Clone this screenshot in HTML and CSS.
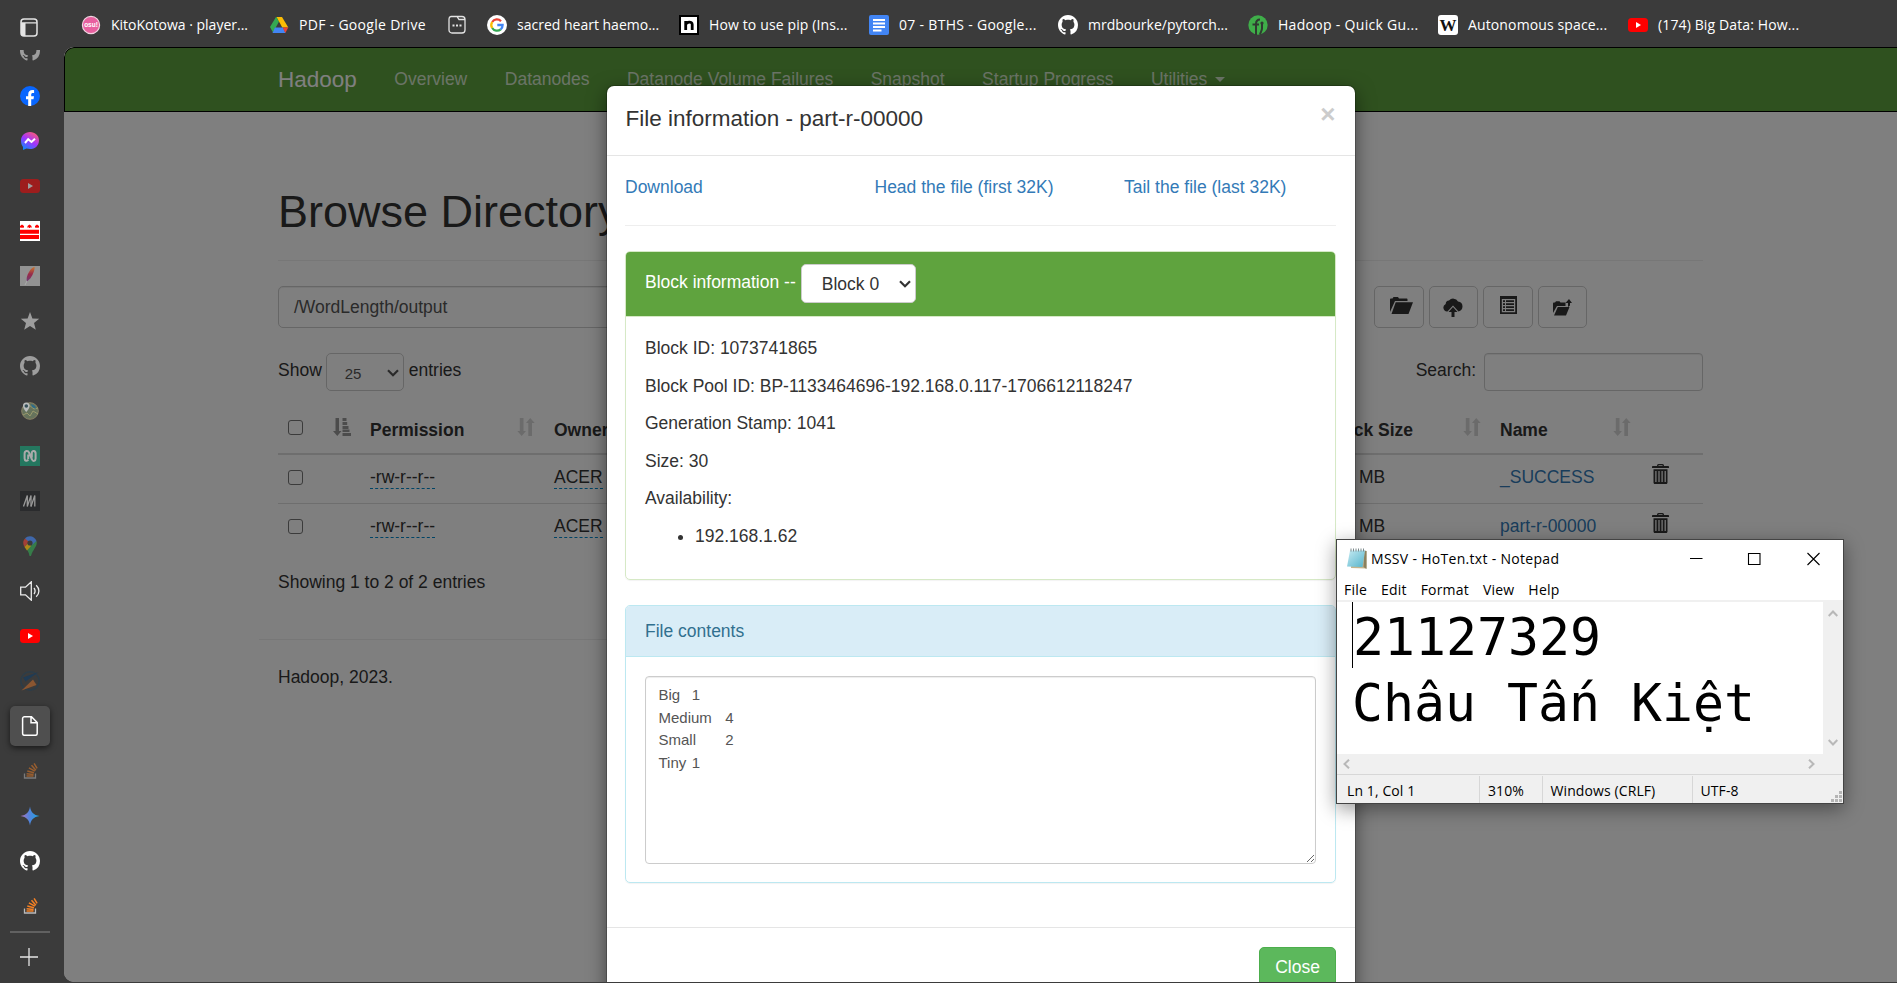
FILE: index.html
```html
<!DOCTYPE html>
<html lang="en">
<head>
<meta charset="utf-8">
<title>Browsing HDFS</title>
<link rel="stylesheet" href="styles.css">
</head>
<body>
<svg class="defs" width="0" height="0" aria-hidden="true">
  <defs>
    <linearGradient id="msg" x1="0.2" y1="1" x2="0.8" y2="0"><stop offset="0" stop-color="#0a8cff"/><stop offset=".5" stop-color="#a033ff"/><stop offset="1" stop-color="#ff5c72"/></linearGradient>
    <linearGradient id="gem" x1="0" y1="0" x2="1" y2="0"><stop offset="0" stop-color="#b573b8"/><stop offset=".45" stop-color="#5583dd"/><stop offset="1" stop-color="#18a5e0"/></linearGradient>
    <linearGradient id="quill" x1="0" y1="1" x2="0" y2="0"><stop offset="0" stop-color="#6b3b77"/><stop offset=".5" stop-color="#9a2b49"/><stop offset="1" stop-color="#c9782d"/></linearGradient>
    <linearGradient id="pad" x1="0" y1="0" x2="1" y2="1"><stop offset="0" stop-color="#c5eaf2"/><stop offset="1" stop-color="#55b4cb"/></linearGradient>
  </defs>
  <symbol id="github" viewBox="0 0 16 16"><path fill="currentColor" d="M8 0C3.58 0 0 3.58 0 8c0 3.54 2.29 6.53 5.47 7.59.4.07.55-.17.55-.38 0-.19-.01-.82-.01-1.49-2.01.37-2.53-.49-2.69-.94-.09-.23-.48-.94-.82-1.13-.28-.15-.68-.52-.01-.53.63-.01 1.08.58 1.23.82.72 1.21 1.87.87 2.33.66.07-.52.28-.87.51-1.07-1.78-.2-3.64-.89-3.64-3.95 0-.87.31-1.59.82-2.15-.08-.2-.36-1.02.08-2.12 0 0 .67-.21 2.2.82.64-.18 1.32-.27 2-.27s1.36.09 2 .27c1.53-1.04 2.2-.82 2.2-.82.44 1.1.16 1.92.08 2.12.51.56.82 1.27.82 2.15 0 3.07-1.87 3.75-3.65 3.95.29.25.54.73.54 1.48 0 1.07-.01 1.93-.01 2.2 0 .21.15.46.55.38A8.01 8.01 0 0 0 16 8c0-4.42-3.58-8-8-8z"/></symbol>
  <symbol id="youtube" viewBox="0 0 20 20"><rect y="3" width="20" height="14" rx="3.5" fill="red"/><path d="M8 7v6l5-3z" fill="#fff"/></symbol>
  <symbol id="stack" viewBox="0 0 20 20"><path d="M4.500 12.500V17h11v-4.500" fill="none" stroke="#bcbbbb" stroke-width="1.300"/><g stroke="#f48024" stroke-width="1.500"><path d="M6.500 15h7M6.600 12.700l7 .7M7.300 10l6.700 1.700M8.900 6.900l6 3.300M11.500 4.300l4.400 5M14.100 2.300l3 5"/></g></symbol>
  <symbol id="sort" viewBox="0 0 18 18"><path fill="currentColor" d="M2.800 0h3.700v13H9l-4.300 5L.3 13h2.500zM11.300 18H15V5h2.700L13.200 0 9 5h2.300z"/></symbol>
  <symbol id="trash" viewBox="0 0 17 20"><path fill="currentColor" fill-rule="evenodd" d="M5 2c0-1.300.5-2 1.500-2h4c1 0 1.500.7 1.500 2h4c.6 0 1 .4 1 1v1H0V3c0-.6.400-1 1-1zm1.300 0h4.400c0-.5-.2-.8-.6-.8H6.900c-.4 0-.6.300-.6.800zM1.500 5.300h14V18.500c0 .9-.5 1.500-1.300 1.500H2.800c-.8 0-1.300-.6-1.300-1.500zM3.300 7v11h1.200V7zm3.100 0v11h1.200V7zm3.100 0v11h1.200V7zm3.100 0v11h1.200V7z"/></symbol>
</svg>

<div class="browser">
  <aside class="sidebar">
    <div class="side-top">
      <svg width="18" height="19" viewBox="0 0 18 19"><rect x="1" y="1" width="16" height="17" rx="3" fill="none" stroke="#e4e4e4" stroke-width="1.500"/><path d="M1 5h4.500v13H3a2 2 0 0 1-2-2zM1 4.300h16v1.200H1z" fill="#e4e4e4"/></svg>
    </div>
    <div class="side-list"><div class="side-track">
      <div class="tab dim"><svg class="ic"><use href="#github"/></svg></div>
      <div class="tab"><svg class="ic" viewBox="0 0 20 20"><circle cx="10" cy="10" r="10" fill="#0866ff"/><path fill="#fff" d="M8.200 20v-6.700H6v-3h2.200V8.700C8.200 5.500 9.700 4 12.500 4c.6 0 1.300.1 1.600.2V7h-1.200c-1.300 0-1.700.6-1.700 1.800v1.500H14l-.5 3h-2.300V20z"/></svg></div>
      <div class="tab"><svg class="ic" viewBox="0 0 20 20"><path fill="url(#msg)" d="M10 1C4.800 1 1 4.700 1 9.600c0 2.600.5 4.700 2 6.300V19l3.500-1.400c1 .3 2.400.5 3.500.5 5.200 0 9-3.700 9-8.600S15.200 1 10 1z"/><path d="M5 12l3.200-3.800 3.300 2.700L15 7.700" fill="none" stroke="#fff" stroke-width="2"/></svg></div>
      <div class="tab dim"><svg class="ic"><use href="#youtube"/></svg></div>
      <div class="tab"><svg class="ic" viewBox="0 0 20 20"><path fill="#fff" d="M0 0h20v20H0z"/><path fill="red" d="M0 8.700h19v4H0zM0 14h19v4H0zM0 7V5l2-1.500L4 5v2L2.700 6v1H1.300V6zM7.500 7V5l2-1.500 2 1.500v2l-1.300-1v1H8.800V6zM15 7V5l2-1.500L19 5v2l-1.300-1v1h-1.400V6z"/></svg></div>
      <div class="tab"><svg class="ic" viewBox="0 0 20 20"><path fill="#929292" d="M0 0h20v20H0z"/><path fill="url(#quill)" d="M14.500.8c.5 3-1.500 8-4 11.500L7 15.500c-1-3 0-6 2-9.500 1.600-2.700 3.500-4.700 5.500-5.200z"/><path d="M7 15l-2 4" stroke="#aaa"/></svg></div>
      <div class="tab"><svg class="ic" viewBox="0 0 20 20"><path fill="#9d9d9d" d="M10 1l2.400 6.500 6.800.3-5.200 4.300 1.800 6.600L10 15l-5.800 3.700L6 12.100.8 7.800l6.800-.3z"/></svg></div>
      <div class="tab dim"><svg class="ic"><use href="#github"/></svg></div>
      <div class="tab"><svg class="ic" viewBox="0 0 20 20"><circle cx="10" cy="10" r="8.300" fill="#66735c" stroke="#8a8365"/><path d="M3 14l4-2 3 3 3-5 5 3M9 4l5 4 4-1" fill="none" stroke="#9a9a6c"/><path d="M11 3l4 2 1 3-4-2z" fill="#2d6d8b"/><path fill="#b9bcbc" d="M6.300 1.500A3.300 3.300 0 0 1 9.600 5c0 2.500-3.300 6-3.300 6S3 7.500 3 5a3.300 3.300 0 0 1 3.300-3.500z"/><circle cx="6.300" cy="5" r="1.800" fill="#36505a"/></svg></div>
      <div class="tab"><svg class="ic" viewBox="0 0 20 20"><path fill="#24775f" d="M0 0h20v20H0z"/><path d="M8.300 13.500c-1 2-3.700 1.500-3.700-1V7.500C4.600 4.500 8 4 9 6.500l3 7c1 2.500 3.600 1.500 3.600-1v-5c0-3-3.800-3.500-3.800-.5v4.500M8.200 8.500V13" fill="none" stroke="#aaa" stroke-width="2"/></svg></div>
      <div class="tab"><svg class="ic" viewBox="0 0 20 20"><path fill="#2a2b2d" d="M0 0h20v20H0z"/><path d="M3.500 15.500L7.300 4.500v11l3.700-11v11" fill="none" stroke="#999" stroke-width="1.300"/><path d="M11 15.500L14.800 4.500v11" fill="none" stroke="#999" stroke-width="1.300"/></svg></div>
      <div class="tab"><svg class="ic faded" viewBox="0 0 20 20"><path fill="#34a853" d="M16.500 5c1.500 5-3.500 8-5.500 15h-1.500C9 16 7 13.500 5 11z"/><path fill="#4285f4" d="M5 2.500C8-1 14.500-.5 16.500 5L12 9 7 6z"/><path fill="#ea4335" d="M5 2.500L9 6l-4.500 5C2.500 7.500 3 4.500 5 2.500z"/><path fill="#fbbc04" d="M4.500 11L9 6l2 4-4 4.500z"/><circle cx="10" cy="7" r="2.600" fill="#3b3b3b"/></svg></div>
      <div class="tab"><svg class="ic" viewBox="0 0 20 20" fill="none" stroke="#ececec" stroke-width="1.300"><path d="M.7 6.200h4.800l5.800-5.400v18.400l-5.800-5.400H.7zM14 7c1.300 1.800 1.300 4.200 0 6M16.200 4.200c3.600 3.300 3.600 8.300 0 11.600"/></svg></div>
      <div class="tab"><svg class="ic"><use href="#youtube"/></svg></div>
      <div class="tab"><svg class="ic" viewBox="0 0 20 20"><circle cx="10" cy="10" r="9.200" fill="none" stroke="#2c3d49" stroke-width="1.500"/><path fill="#203b54" d="M18.500 1L3 6.500l2.500 4z"/><path fill="#8a5631" d="M1.500 19.500l15-5.500L13 8.500z"/></svg></div>
      <div class="tab active"><svg class="ic" viewBox="0 0 20 20" fill="none" stroke="#fff" stroke-width="1.500"><path d="M4.500.8h7l5.700 5.700v11a1.800 1.800 0 0 1-1.800 1.800h-11a1.800 1.800 0 0 1-1.800-1.800v-15A1.800 1.800 0 0 1 4.500.8zM11 .8v6h6.200"/></svg></div>
      <div class="tab dim"><svg class="ic"><use href="#stack"/></svg></div>
      <div class="tab"><svg class="ic" viewBox="0 0 20 20"><path fill="url(#gem)" d="M10 .5c.8 5.600 3.500 8.700 9.500 9.500-6 .8-8.700 3.900-9.500 9.500C9.200 13.900 6.500 10.800.5 10 6.500 9.200 9.200 6.100 10 .5z"/></svg></div>
      <div class="tab"><svg class="ic"><use href="#github"/></svg></div>
      <div class="tab"><svg class="ic"><use href="#stack"/></svg></div>
    </div></div>
    <div class="side-rule"></div>
    <div class="side-add"><svg width="18" height="18" viewBox="0 0 18 18"><path d="M9 0v18M0 9h18" stroke="#e6e6e6" stroke-width="1.300"/></svg></div>
  </aside>

  <div class="main">
    <nav class="bookmarks">
      <a class="bm"><svg class="ic" viewBox="0 0 20 20"><circle cx="10" cy="10" r="8.600" fill="#e8609f" stroke="#f3d4e2" stroke-width="1.200"/><text x="10" y="12.300" text-anchor="middle" class="osu">osu!</text></svg><span class="lbl">KitoKotowa · player...</span></a>
      <a class="bm drive loose"><svg class="ic" viewBox="0 0 20 20"><path fill="#34a853" d="M7 2h5.500L4 17.500 1 12z"/><path fill="#188038" d="M7 2h5.500L10 7z"/><path fill="#fbbc04" d="M7.500 2H13l6.300 10.500h-6z"/><path fill="#4285f4" d="M6 12.500h8L16.500 18h-13z"/><path fill="#ea4335" d="M13.700 12.500h5.600l-3 5.500z"/></svg><span class="lbl">PDF - Google Drive</span></a>
      <a class="bm group"><svg class="ic" viewBox="0 0 20 20"><path d="M4 1.500h6l2 3h6V15a3 3 0 0 1-3 3H5a3 3 0 0 1-3-3V4a2.500 2.500 0 0 1 2-2.500zM10 1.500h5a3 3 0 0 1 3 3" fill="none" stroke="#e4e4e4" stroke-width="1.300"/><path fill="#e4e4e4" d="M5.500 9.500h2v2h-2zM9 9.500h2v2H9zM12.500 9.500h2v2h-2z"/></svg></a>
      <a class="bm google"><svg class="ic" viewBox="0 0 20 20"><circle cx="10" cy="10" r="10" fill="#fff"/><g fill="none" stroke-width="2.300"><path d="M14 6.200A5.600 5.600 0 0 0 5.200 7" stroke="#ea4335"/><path d="M5.200 7a5.600 5.600 0 0 0 0 6" stroke="#fbbc05"/><path d="M5.200 13a5.600 5.600 0 0 0 8.500 1.300" stroke="#34a853"/><path d="M13.700 14.300A5.600 5.600 0 0 0 15.600 10H10.300" stroke="#4285f4"/></g></svg><span class="lbl">sacred heart haemo...</span></a>
      <a class="bm snug"><svg class="ic" viewBox="0 0 20 20"><path fill="#000" d="M0 0h20v20H0z"/><path fill="#fff" d="M2 2h16v16H2z"/><path d="M6.700 15V6M6.700 9.500c1-3 6.500-3.500 6.500 0V15" fill="none" stroke="#000" stroke-width="2.800"/></svg><span class="lbl">How to use pip (Ins...</span></a>
      <a class="bm docs loose"><svg class="ic" viewBox="0 0 20 20"><rect width="20" height="20" rx="2" fill="#4285f4"/><path stroke="#fff" stroke-width="1.800" d="M4 5h12M4 8.500h12M4 12h12M4 15.500h8.500"/></svg><span class="lbl">07 - BTHS - Google...</span></a>
      <a class="bm"><svg class="ic"><use href="#github"/></svg><span class="lbl">mrdbourke/pytorch...</span></a>
      <a class="bm loose"><svg class="ic" viewBox="0 0 20 20"><circle cx="10" cy="10" r="9.700" fill="#3fae49"/><path d="M8 20V9c0-3 1-4.500 4-4.500M4.500 9.500H11M14 8v5.500c0 1.500-1 3-2 6" fill="none" stroke="#303a31" stroke-width="2"/><circle cx="14" cy="8" r="1.600" fill="#303a31"/></svg><span class="lbl">Hadoop - Quick Gu...</span></a>
      <a class="bm snug"><svg class="ic" viewBox="0 0 20 20"><rect width="20" height="20" rx="3" fill="#fff"/><text x="10" y="16" text-anchor="middle" class="wiki">W</text></svg><span class="lbl">Autonomous space...</span></a>
      <a class="bm snug"><svg class="ic"><use href="#youtube"/></svg><span class="lbl">(174) Big Data: How...</span></a>
    </nav>

    <div class="page">
      <header class="navbar">
        <a class="brand">Hadoop</a>
        <a>Overview</a><a>Datanodes</a><a>Datanode Volume Failures</a><a>Snapshot</a><a>Startup Progress</a><a>Utilities <i class="caret"></i></a>
      </header>
      <main class="container">
        <h1>Browse Directory</h1>
        <div class="path-row">
          <div class="path">/WordLength/output</div>
          <div class="actions">
            <button><svg class="folder" width="23" height="18" viewBox="0 0 23 18"><path fill="currentColor" d="M0 15V2.500C0 2 .5 1.500 1 1.500h1.500L3.500 0H8l1 1.500h7.500c.6 0 1 .4 1 1V4H5zM5.700 5.300H23L18.500 17H1.500z"/></svg></button>
            <button><svg width="20" height="19" viewBox="0 0 20 19"><path fill="currentColor" d="M4 13.500a4 4 0 0 1-1.300-7.600A3.500 3.500 0 0 1 6 2.500 5.500 5.500 0 0 1 15 3.500a5 5 0 0 1 4.500 5c0 2.500-1.500 4.500-4 5L10 7.500l-5.500 6zM10 9l4.500 5h-3v5h-3v-5h-3z"/></svg></button>
            <button><svg class="up" width="17" height="18" viewBox="0 0 17 18"><path fill="currentColor" fill-rule="evenodd" d="M0 0h17v18H0zM1.800 3v13.300h13.400V3z"/><path fill="currentColor" d="M3 4.200h2v1.700H3zM6 4.200h8v1.700H6zM3 7.200h2v1.700H3zM6 7.200h8v1.700H6zM3 10.200h2v1.700H3zM6 10.200h8v1.700H6zM3 13.200h2v1.700H3zM6 13.200h8v1.700H6z"/></svg></button>
            <button><svg width="19" height="17" viewBox="0 0 19 17"><path fill="currentColor" d="M0 14V4.500C0 4 .4 3.500 1 3.500h1L3 2.200h3.500l1 1.300h5V7H4zM4.800 8h11.700L13 16.500H1zM15 8V4h-2.500L16 0l3 4h-2v2.500z"/></svg></button>
          </div>
        </div>
        <div class="filter-row">
          <div class="length">Show <span class="select small">25<svg class="chev" width="12" height="8" viewBox="0 0 12 8"><path d="M1 1.200l5 5 5-5" fill="none" stroke="currentColor" stroke-width="2.200"/></svg></span> entries</div>
          <div class="search">Search: <span class="field"></span></div>
        </div>
        <div class="table">
          <div class="tr head">
            <span><i class="check"></i></span>
            <span><svg class="sorted" width="18" height="18" viewBox="0 0 18 18"><path fill="currentColor" d="M2.500 0H6v13h2.500l-4.200 5L0 13h2.500zM9.500 0h4v3h-4zM9.500 4h4.700v3H9.500zM9.500 8h6v3h-6zM9.500 11.500h7V14h-7zM9.500 15H18v3H9.500z"/></svg></span>
            <span>Permission</span><span class="sort"><svg width="18" height="18"><use href="#sort"/></svg></span>
            <span>Owner</span><span class="right">Block Size</span><span class="sort"><svg width="18" height="18"><use href="#sort"/></svg></span>
            <span>Name</span><span class="sort"><svg width="18" height="18"><use href="#sort"/></svg></span><span></span>
          </div>
          <div class="tr"><span><i class="check"></i></span><span></span><span><em>-rw-r--r--</em></span><span></span><span><em>ACER</em></span><span class="mb">MB</span><span></span><span class="link">_SUCCESS</span><span></span><span class="bin"><svg width="17" height="20"><use href="#trash"/></svg></span></div>
          <div class="tr"><span><i class="check"></i></span><span></span><span><em>-rw-r--r--</em></span><span></span><span><em>ACER</em></span><span class="mb">MB</span><span></span><span class="link">part-r-00000</span><span></span><span class="bin"><svg width="17" height="20"><use href="#trash"/></svg></span></div>
        </div>
        <p class="summary">Showing 1 to 2 of 2 entries</p>
        <div class="rule"></div>
        <p class="foot">Hadoop, 2023.</p>
      </main>

      <div class="backdrop">
        <section class="modal">
          <header class="modal-head"><h4>File information - part-r-00000</h4><b class="x">×</b></header>
          <div class="modal-body">
            <div class="links"><a>Download</a><a>Head the file (first 32K)</a><a>Tail the file (last 32K)</a></div>
            <div class="panel green">
              <div class="panel-head">Block information -- <span class="select">Block 0<svg class="chev" width="12" height="8" viewBox="0 0 12 8"><path d="M1 1.200l5 5 5-5" fill="none" stroke="currentColor" stroke-width="2.200"/></svg></span></div>
              <div class="panel-body">
                <p>Block ID: 1073741865</p><p>Block Pool ID: BP-1133464696-192.168.0.117-1706612118247</p><p>Generation Stamp: 1041</p><p>Size: 30</p><p>Availability:</p>
                <ul><li>192.168.1.62</li></ul>
              </div>
            </div>
            <div class="panel blue">
              <div class="panel-head">File contents</div>
              <div class="panel-body"><textarea>Big	1
Medium	4
Small	2
Tiny	1</textarea></div>
            </div>
          </div>
          <footer class="modal-foot"><button class="close">Close</button></footer>
        </section>
      </div>
    </div>
  </div>
</div>

<section class="notepad">
  <header class="np-title">
    <svg width="20" height="21" viewBox="0 0 20 21"><path fill="#c4b48d" d="M5 3h14.500v17.500L4 20z"/><path fill="#8b815f" d="M17.500 2.500l2 .5v18l-3-2z"/><path fill="url(#pad)" d="M3 2.500h15L15.500 19 0 18.500z"/><path d="M4 3.500V.5M6.500 3.500V.5M9 3.500V.5M11.500 3.500V.5M14 3.500V.5M16.500 3.500V.5" stroke="#7d8a8c"/></svg>
    <span class="np-name">MSSV - HoTen.txt - Notepad</span>
    <svg class="np-ctl" width="130" height="14" viewBox="0 0 130 14" fill="none" stroke="#000" stroke-width="1.100"><path d="M0 6.500h12.500M117.500 1l12 12M129.500 1l-12 12"/><path d="M58.500 1.500h11.500v11H58.500z"/></svg>
  </header>
  <div class="np-menu"><span>File</span><span>Edit</span><span>Format</span><span>View</span><span>Help</span></div>
  <div class="np-mid">
    <div class="np-text"><div>21127329</div><div>Châu Tấn Kiệt</div></div>
    <div class="np-vs"><svg width="10" height="7" viewBox="0 0 10 7"><path d="M.7 6L5 1.500 9.300 6"/></svg><svg width="10" height="7" viewBox="0 0 10 7"><path d="M.7 1L5 5.500 9.300 1"/></svg></div>
  </div>
  <div class="np-hs"><svg width="7" height="10" viewBox="0 0 7 10"><path d="M6 .7L1.500 5 6 9.300"/></svg><svg width="7" height="10" viewBox="0 0 7 10"><path d="M1 .7L5.500 5 1 9.300"/></svg></div>
  <footer class="np-status"><span>Ln 1, Col 1</span><span>310%</span><span>Windows (CRLF)</span><span>UTF-8</span>
    <svg class="grip" width="11" height="11" viewBox="0 0 11 11"><path fill="#b5b5b5" d="M8 0h3v3H8zM8 4h3v3H8zM8 8h3v3H8zM4 4h3v3H4zM4 8h3v3H4zM0 8h3v3H0z"/></svg>
  </footer>
</section>
</body>
</html>
```

FILE: styles.css
```css
* { box-sizing: border-box; }
body { margin: 0; width: 1897px; height: 983px; overflow: hidden; background: #3b3b3b; font: 17.5px/25px "Liberation Sans", Arial, sans-serif; color: #333; }
.defs { position: absolute; }
svg { display: block; flex: none; }
h1, h4, p, ul { margin: 0; font-weight: normal; }
.browser { display: flex; height: 983px; }
.ic { width: 20px; height: 20px; }

/* vertical tab strip */
.sidebar { width: 64px; height: 983px; display: flex; flex-direction: column; color: #fff; }
.side-top { height: 50px; padding: 18px 0 0 20px; }
.side-list { height: 879px; overflow: hidden; }
.side-track { margin-top: -19px; }
.tab { width: 40px; height: 40px; margin: 0 0 5px 10px; display: flex; align-items: center; justify-content: center; }
.tab.dim svg { opacity: .5; }
.faded { opacity: .6; }
.tab.active { background: #4f4f4f; border-radius: 5px; box-shadow: 0 2px 6px rgba(0,0,0,.6); }
.side-rule { margin: 2px 0 0 10px; width: 40px; height: 2px; background: #616161; }
.side-add { padding: 15px 0 0 20px; }

/* bookmarks bar */
.main { flex: 1; display: flex; flex-direction: column; }
.bookmarks { height: 47px; padding: 15px 0 0 17px; display: flex; }
.bm { width: 190px; height: 20px; display: flex; gap: 10px; align-items: center; color: #fff; font: 14px/20px "Open Sans", sans-serif; white-space: nowrap; }
.bm.drive { width: 178px; margin-left: -2px; }
.bm.group { width: 40px; }
.bm.google { width: 192px; }
.bm.docs { width: 189px; }
.snug .lbl { letter-spacing: .13px; }
.loose .lbl { letter-spacing: .3px; }
.osu { font: bold 6.500px "Liberation Sans", sans-serif; fill: #fff; }
.wiki { font: bold 17px "Liberation Serif", serif; fill: #111; }

/* page */
.page { position: relative; height: 935px; background: #fff; border-radius: 10px 0 0 10px; overflow: hidden; }
.navbar { height: 65px; background: #5fa33e; border: 1px solid #000; border-right: 0; padding-left: 213px; display: flex; align-items: center; border-radius: 10px 0 0 0; color: #d6e8ce; }
.navbar a { margin-right: 37.5px; white-space: nowrap; padding-bottom: 1px; }
.navbar .brand { font-size: 22.5px; color: #fff; }
.caret { display: inline-block; margin-left: 3px; vertical-align: middle; border: 5px solid transparent; border-top-color: currentColor; border-bottom: 0; }
.container { width: 1425px; margin-left: 214px; }
h1 { font-size: 45px; line-height: 50px; margin-top: 75px; padding-bottom: 23px; border-bottom: 1px solid #eee; }
.path-row { display: flex; margin-top: 25px; height: 42px; }
.path { width: 1060px; border: 1px solid #ccc; border-radius: 5px; padding: 8px 15px; color: #555; box-shadow: inset 0 1px 1px rgba(0,0,0,.075); }
.actions { margin-left: 36px; display: flex; gap: 5px; }
.actions button { width: 49.5px; height: 42px; padding: 0; border: 1px solid #ccc; border-radius: 5px; background: #fff; color: #333; display: flex; align-items: center; justify-content: center; }
.folder { margin: 0 0 2px 6px; }
.up { margin: 0 0 5px 2px; }
.filter-row { display: flex; justify-content: space-between; margin-top: 25px; height: 38px; line-height: 35px; }
.length { display: flex; gap: 5px; }
.length .select { margin-left: -1px; }
.search { display: flex; gap: 8px; }
.field { width: 219px; height: 38px; border: 1px solid #ccc; border-radius: 4px; box-shadow: inset 0 1px 1px rgba(0,0,0,.075); }
.select { display: flex; justify-content: space-between; align-items: center; width: 115px; height: 39px; border: 1px solid #ccc; border-radius: 5px; padding: 0 4px 0 20px; background: #fff; color: #333; }
.select.small { width: 78px; height: 38px; font-size: 15px; padding: 2px 4px 0 18px; color: #555; }
.tr { height: 49px; border-top: 1px solid #ddd; display: grid; grid-template-columns: 45px 37px 147px 37px 765px 144px 37px 113px 39px 51px; line-height: 25px; padding: 10px 0 0 10px; white-space: nowrap; }
.tr:nth-child(2) { border-top: 0; height: 48px; }
.tr.head { height: 64px; border-top: 0; border-bottom: 2px solid #ddd; padding-top: 27px; font-weight: bold; }
.right { justify-self: end; margin-right: 50px; }
.check { display: block; width: 15px; height: 15px; margin-top: 5px; border: 1.500px solid #767676; border-radius: 3px; }
.head .check { margin-top: 2px; }
.sort svg { color: #d6d6d6; }
.sorted { color: #999; }
em { font-style: normal; display: inline-block; vertical-align: top; height: 24px; border-bottom: 1px dashed #08c; }
.mb { padding-left: 40px; }
.link { color: #337ab7; }
.bin svg { margin-top: -1px; }
.summary { margin-top: 18px; }
.rule { height: 1px; background: #eee; margin: 44px 0 0 -19px; width: 1463px; }
.foot { margin-top: 25px; }

/* modal */
.backdrop { position: absolute; inset: 0; background: rgba(0,0,0,.5); }
.modal { width: 748px; height: 940px; margin: 39px 0 0 543px; background: #fff; border-radius: 7px; box-shadow: 0 6px 19px rgba(0,0,0,.5), 0 0 0 1px rgba(0,0,0,.2); }
.modal-head { height: 70px; padding: 17px 19.5px 0 18.5px; border-bottom: 1px solid #e5e5e5; display: flex; justify-content: space-between; }
h4 { font-size: 22.5px; line-height: 31px; }
.x { font-size: 26px; line-height: 22px; color: #ccc; }
.modal-body { padding: 19px 19px 18px 18px; height: 771px; }
.links { display: grid; grid-template-columns: 249.5px 249.5px auto; height: 51px; color: #337ab7; border-bottom: 1px solid #eee; }
.panel { border: 1px solid; border-radius: 5px; box-shadow: 0 1px 1px rgba(0,0,0,.05); margin-top: 25px; overflow: hidden; }
.panel-head { border-bottom: 1px solid; }
.green, .green .panel-head { border-color: #d6e9c6; }
.green { height: 329px; }
.green .panel-head { background: #5fa33e; color: #fff; height: 65px; padding: 12px 19px; display: flex; gap: 5px; line-height: 36px; }
.panel-body { padding: 19px; }
.panel-body p { margin-bottom: 12.5px; }
.panel-body ul { padding-left: 50px; }
.blue, .blue .panel-head { border-color: #bce8f1; }
.blue { height: 278px; }
.blue .panel-head { background: #d9edf7; color: #31708f; height: 51px; padding: 13px 19px; }
textarea { display: block; width: 671px; height: 188px; padding: 7px 12.5px; border: 1px solid #ccc; border-radius: 4px; font: 15px/22.5px "Liberation Sans", Arial, sans-serif; color: #555; box-shadow: inset 0 1px 1px rgba(0,0,0,.075); }
.modal-foot { border-top: 1px solid #e5e5e5; padding: 19px; display: flex; justify-content: flex-end; }
.close { width: 77px; height: 43px; padding: 0 0 3px; background: #5cb85c; border: 1px solid #4cae4c; border-radius: 5px; color: #fff; font: 17.5px "Liberation Sans", Arial, sans-serif; }

/* floating desktop window */
.notepad { position: absolute; left: 1336px; top: 539px; width: 508px; height: 265px; background: #fff; border: 1px solid #444; box-shadow: 0 5px 18px rgba(0,0,0,.4); color: #000; font: 14px/20px "Open Sans", sans-serif; display: flex; flex-direction: column; letter-spacing: .1px; }
.np-title { height: 38px; padding: 8px 23px 0 10px; display: flex; }
.np-name { margin: 1px auto 0 4px; white-space: nowrap; letter-spacing: .3px; }
.np-ctl { margin-top: 4px; }
.np-menu { height: 24px; padding: 2px 0 0 7px; border-bottom: 2px solid #f0f0f0; display: flex; gap: 14px; letter-spacing: .2px; }
.np-mid { height: 152px; display: flex; }
.np-text { flex: 1; padding-left: 15px; font: 51.5px/66px "DejaVu Sans Mono", monospace; letter-spacing: 0; white-space: pre; }
.np-text div { height: 66px; padding-top: 2px; }
.np-text div:first-child { border-left: 1px solid #000; }
.np-vs { width: 20px; background: #f0f0f0; padding: 8px 5px; display: flex; flex-direction: column; justify-content: space-between; }
.np-vs path, .np-hs path { fill: none; stroke: #b8b8b8; stroke-width: 2; }
.np-hs { height: 20px; background: #f0f0f0; padding: 5px 28px 5px 6px; display: flex; justify-content: space-between; }
.np-status { flex: 1; background: #f0f0f0; border-top: 1px solid #d7d7d7; display: grid; grid-template-columns: 142px 62.5px 150px 1fr; position: relative; line-height: 29px; white-space: nowrap; }
.np-status span { height: 27px; padding-left: 8px; border-left: 1px solid #d7d7d7; margin-top: 1px; }
.np-status span:first-child { border: 0; padding-left: 10px; }
.grip { position: absolute; right: 1px; bottom: 1px; }
```
